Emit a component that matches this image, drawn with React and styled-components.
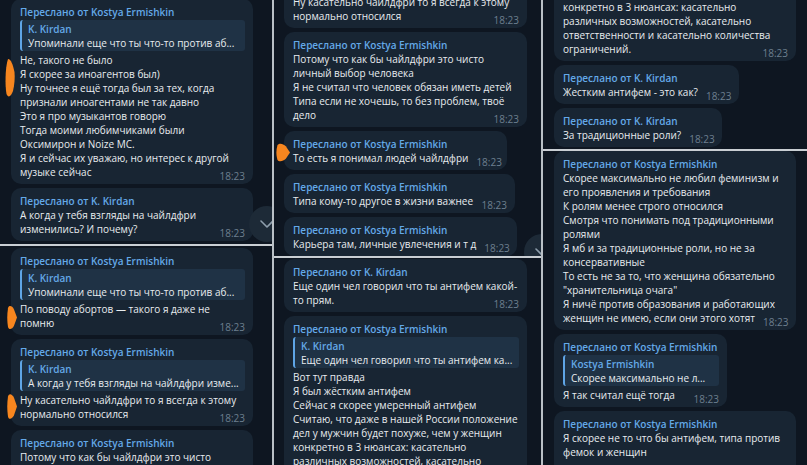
import React from "react";
import styled, { createGlobalStyle } from "styled-components";

const GlobalStyle = createGlobalStyle`
  html, body {
    margin: 0;
    padding: 0;
    background: #0e1621;
  }
  body {
    font-family: "Open Sans", "Noto Sans", sans-serif;
  }
`;

const Screen = styled.div`
  width: 807px;
  height: 465px;
  display: flex;
  overflow: hidden;
  background: #0e1621;
`;

const Column = styled.div`
  width: ${(p) => p.$w}px;
  flex: none;
  display: flex;
  flex-direction: column;
`;

const VLine = styled.div`
  width: 2px;
  flex: none;
  background: #b9c0c6;
`;

const HLine = styled.div`
  height: 2px;
  flex: none;
  background: #c9ced3;
`;

const Panel = styled.div`
  position: relative;
  overflow: hidden;
  flex: ${(p) => (p.$h ? `0 0 ${p.$h}px` : "1")};
  padding-left: ${(p) => p.$left}px;
`;

const Feed = styled.div`
  display: flex;
  flex-direction: column;
  align-items: flex-start;
  gap: 4px;
  margin-top: ${(p) => p.$shift}px;
`;

const Bubble = styled.div`
  position: relative;
  box-sizing: border-box;
  width: ${(p) => p.$w}px;
  flex: none;
  padding: 6px 8px 5px 9px;
  background: #182533;
  border-radius: 10px;
  font-size: 10px;
  line-height: 14px;
  color: #e8ecef;
  white-space: nowrap;
`;

const Forwarded = styled.div`
  color: #64a9e8;
  font-weight: 600;
`;

const Quote = styled.div`
  margin: 1px 0 2px;
  padding: 2px 6px 1px 6px;
  border-left: 2px solid #5fa5e6;
  border-radius: 3px;
  background: #1f3245;
  overflow: hidden;
`;

const QuoteName = styled.div`
  color: #64a9e8;
  font-weight: 600;
`;

const Line = styled.div``;

const LastRow = styled.div`
  display: flex;
  align-items: flex-start;
`;

const LastText = styled.span`
  flex: 1;
`;

const Time = styled.span`
  flex: none;
  margin: 0 0 -4px 8px;
  padding-top: 4px;
  font-size: 10px;
  color: #6d7f8f;
`;

const Marker = styled.svg`
  position: absolute;
  left: ${(p) => p.$x}px;
  top: ${(p) => p.$y}px;
  width: ${(p) => p.$w}px;
  height: ${(p) => p.$h}px;
`;

const ScrollDown = styled.div`
  position: absolute;
  left: ${(p) => p.$x}px;
  top: ${(p) => p.$y}px;
  width: 36px;
  height: 36px;
  border-radius: 50%;
  background: #1d2a37;
  display: flex;
  align-items: center;
  justify-content: center;
`;

const MARKER_PATHS = {
  leaf: "M3 1 C6 1 8 7 9.5 14 C10 20 9.5 27 8 33 C6 39 3 40 1.5 36 C0 28 0 10 3 1 Z",
  arrow: "M1 2.5 C2 0 5 0.5 7 3.5 L10 10 L7 16.5 C5 19.5 2 20 1 17.5 C0 12 0 8 1 2.5 Z",
};

const Scribble = ({ kind, x, y, w, h }) => (
  <Marker
    $x={x}
    $y={y}
    $w={w}
    $h={h}
    viewBox={kind === "leaf" ? "0 0 10 40" : "0 0 10 20"}
    preserveAspectRatio="none"
  >
    <path d={MARKER_PATHS[kind]} fill="#f7861f" />
  </Marker>
);

const Chevron = () => (
  <svg width="14" height="8" viewBox="0 0 14 8">
    <path
      d="M1 1 L7 7 L13 1"
      fill="none"
      stroke="#8e9eac"
      strokeWidth="1.6"
      strokeLinecap="round"
      strokeLinejoin="round"
    />
  </svg>
);

const Message = ({ from, quote, lines, w, marker }) => {
  const body = lines.slice(0, -1);
  const last = lines[lines.length - 1];
  return (
    <Bubble $w={w}>
      <Forwarded>Переслано от {from}</Forwarded>
      {quote && (
        <Quote>
          <QuoteName>{quote.name}</QuoteName>
          <div>{quote.text}</div>
        </Quote>
      )}
      {body.map((l, i) => (
        <Line key={i}>{l}</Line>
      ))}
      <LastRow>
        <LastText>{last}</LastText>
        <Time>18:23</Time>
      </LastRow>
      {marker && <Scribble {...marker} />}
    </Bubble>
  );
};

const KOSTYA = "Kostya Ermishkin";
const KIRDAN = "K. Kirdan";

const antifemLines = [
  "Вот тут правда",
  "Я был жёстким антифем",
  "Сейчас я скорее умеренный антифем",
  "Считаю, что даже в нашей России положение",
  "дел у мужчин будет похуже, чем у женщин",
  "конкретно в 3 нюансах: касательно",
  "различных возможностей, касательно",
  "ответственности и касательно количества",
  "ограничений.",
];

const antifemMsg = {
  from: KOSTYA,
  quote: { name: KIRDAN, text: "Еще один чел говорил что ты антифем ка..." },
  lines: antifemLines,
};

const childfreeMsg = {
  from: KOSTYA,
  quote: { name: KIRDAN, text: "А когда у тебя взгляды на чайлдфри изме..." },
  lines: ["Ну касательно чайлдфри то я всегда к этому", "нормально относился"],
};

const personalMsg = {
  from: KOSTYA,
  lines: [
    "Потому что как бы чайлдфри это чисто",
    "личный выбор человека",
    "Я не считал что человек обязан иметь детей",
    "Типа если не хочешь, то без проблем, твоё",
    "дело",
  ],
};

const App = () => {
  return (
    <>
      <GlobalStyle />
      <Screen>
        <Column $w={272}>
          <Panel $h={244} $left={11}>
            <Feed $shift={-1}>
              <Message
                w={242}
                from={KOSTYA}
                quote={{ name: KIRDAN, text: "Упоминали еще что ты что-то против аб..." }}
                lines={[
                  "Не, такого не было",
                  "Я скорее за иноагентов был)",
                  "Ну точнее я ещё тогда был за тех, когда",
                  "признали иноагентами не так давно",
                  "Это я про музыкантов говорю",
                  "Тогда моими любимчиками были",
                  "Оксимирон и Noize MC.",
                  "Я и сейчас их уважаю, но интерес к другой",
                  "музыке сейчас",
                ]}
                marker={{ kind: "leaf", x: -6, y: 59, w: 10, h: 40 }}
              />
              <Message
                w={242}
                from={KIRDAN}
                lines={["А когда у тебя взгляды на чайлдфри", "изменились? И почему?"]}
              />
            </Feed>
            <ScrollDown $x={249} $y={206}>
              <Chevron />
            </ScrollDown>
          </Panel>
          <HLine />
          <Panel $left={11}>
            <Feed $shift={2}>
              <Message
                w={242}
                from={KOSTYA}
                quote={{ name: KIRDAN, text: "Упоминали еще что ты что-то против аб..." }}
                lines={["По поводу абортов — такого я даже не", "помню"]}
                marker={{ kind: "arrow", x: -4, y: 57, w: 10, h: 25 }}
              />
              <Message
                w={242}
                {...childfreeMsg}
                marker={{ kind: "arrow", x: -4, y: 54, w: 10, h: 27 }}
              />
              <Message w={242} {...personalMsg} />
            </Feed>
          </Panel>
        </Column>

        <VLine />

        <Column $w={267}>
          <Panel $h={256} $left={10}>
            <Feed $shift={-59}>
              <Message w={243} {...childfreeMsg} />
              <Message w={243} {...personalMsg} />
              <Message
                w={223}
                from={KOSTYA}
                lines={["То есть я понимал людей чайлдфри"]}
                marker={{ kind: "arrow", x: -8, y: 12, w: 14, h: 19 }}
              />
              <Message w={231} from={KOSTYA} lines={["Типа кому-то другое в жизни важнее"]} />
              <Message w={233} from={KOSTYA} lines={["Карьера там, личные увлечения и т д"]} />
            </Feed>
            <ScrollDown $x={250} $y={234}>
              <Chevron />
            </ScrollDown>
          </Panel>
          <HLine />
          <Panel $left={10}>
            <Feed $shift={1}>
              <Message
                w={243}
                from={KIRDAN}
                lines={["Еще один чел говорил что ты антифем какой-", "то прям."]}
              />
              <Message w={243} {...antifemMsg} />
            </Feed>
          </Panel>
        </Column>

        <VLine />

        <Column $w={264}>
          <Panel $h={149} $left={11}>
            <Feed $shift={-124}>
              <Message w={242} {...antifemMsg} />
              <Message w={185} from={KIRDAN} lines={["Жестким антифем - это как?"]} />
              <Message w={168} from={KIRDAN} lines={["За традиционные роли?"]} />
            </Feed>
          </Panel>
          <HLine />
          <Panel $left={11}>
            <Feed $shift={0}>
              <Message
                w={242}
                from={KOSTYA}
                lines={[
                  "Скорее максимально не любил феминизм и",
                  "его проявления и требования",
                  "К ролям менее строго относился",
                  "Смотря что понимать под традиционными",
                  "ролями",
                  "Я мб и за традиционные роли, но не за",
                  "консервативные",
                  "То есть не за то, что женщина обязательно",
                  "\"хранительница очага\"",
                  "Я ничё против образования и работающих",
                  "женщин не имею, если они этого хотят",
                ]}
              />
              <Message
                w={173}
                from={KOSTYA}
                quote={{ name: KOSTYA, text: "Скорее максимально не л..." }}
                lines={["Я так считал ещё тогда"]}
              />
              <Message
                w={242}
                from={KOSTYA}
                lines={["Я скорее не то что бы антифем, типа против", "фемок и женщин", ""]}
              />
            </Feed>
          </Panel>
        </Column>
      </Screen>
    </>
  );
};

export default App;
